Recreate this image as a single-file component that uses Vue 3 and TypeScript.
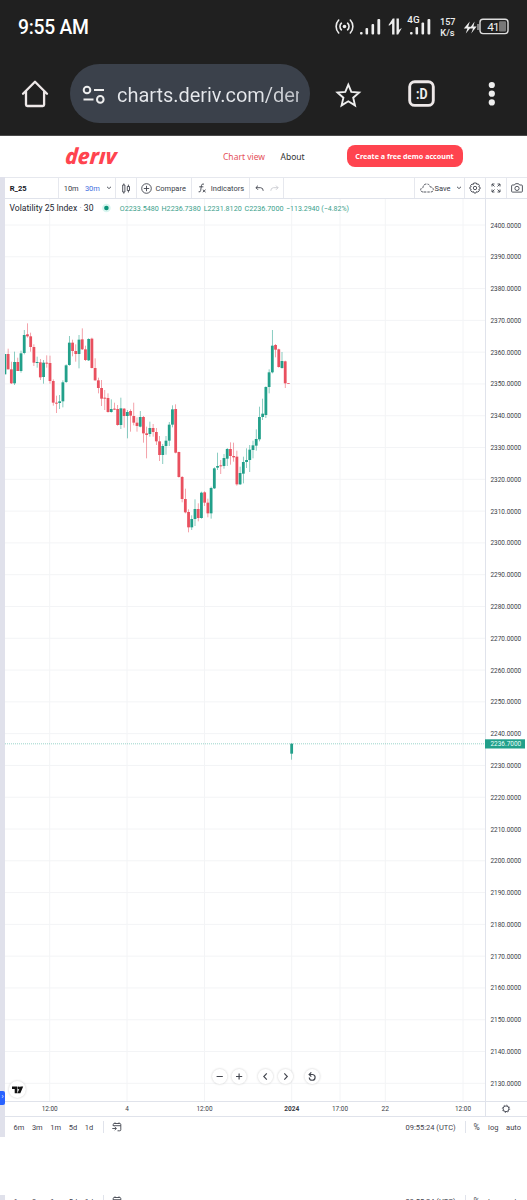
<script setup lang="ts">
type Candle = { x: number; up: boolean; high: number; top: number; bottom: number; low: number }

const STEP = 3.222
const FIRST = 4.9

// Each entry: direction, high, body top, body bottom, low (thirds of a pixel below the group's origin)
type Raw = [string, number, number, number, number]
const groups: { origin: number; rows: Raw[] }[] = [
  {
    origin: 315,
    rows: [
      ['g', 117, 117, 178, 178], ['r', 101, 117, 163, 163], ['r', 140, 163, 205, 207], ['g', 110, 141, 205, 210],
      ['r', 128, 141, 168, 168], ['g', 107, 115, 168, 173], ['g', 45, 60, 114, 118], ['r', 25, 58, 64, 68],
      ['r', 53, 64, 96, 110], ['r', 88, 96, 143, 153], ['g', 125, 141, 144, 158], ['r', 132, 142, 187, 195],
      ['g', 135, 143, 186, 206], ['r', 121, 143, 146, 158], ['r', 122, 144, 198, 206], ['r', 193, 198, 263, 272],
      ['r', 242, 263, 266, 294], ['g', 240, 259, 264, 282], ['g', 196, 202, 259, 277], ['g', 148, 151, 201, 204],
      ['g', 63, 83, 150, 152], ['r', 74, 83, 108, 124], ['r', 88, 108, 117, 140], ['g', 60, 74, 117, 160],
      ['r', 40, 73, 103, 105], ['r', 92, 103, 135, 138], ['g', 70, 72, 136, 138],
    ],
  },
  {
    origin: 330,
    rows: [
      ['r', 23, 26, 114, 115], ['r', 85, 114, 151, 152], ['r', 143, 151, 174, 190], ['r', 150, 174, 206, 228],
      ['r', 180, 203, 206, 240], ['r', 190, 204, 246, 248], ['g', 208, 237, 246, 248], ['r', 218, 236, 239, 240],
      ['r', 225, 237, 285, 287], ['g', 203, 235, 285, 297], ['r', 234, 236, 258, 293], ['g', 240, 246, 258, 325],
      ['r', 238, 243, 257, 305], ['r', 218, 258, 278, 286], ['r', 262, 278, 288, 305], ['g', 243, 261, 290, 292],
      ['r', 258, 261, 310, 338], ['r', 290, 310, 315, 385], ['g', 275, 294, 312, 320], ['r', 282, 294, 306, 320],
      ['r', 294, 306, 334, 345], ['r', 318, 334, 375, 393], ['g', 342, 348, 375, 402], ['g', 318, 332, 348, 374],
      ['g', 276, 284, 332, 348], ['g', 226, 238, 284, 292],
    ],
  },
  {
    origin: 390,
    rows: [
      ['r', 43, 57, 188, 190], ['r', 185, 186, 261, 263], ['r', 258, 261, 327, 337], ['r', 296, 327, 367, 370],
      ['r', 358, 366, 412, 427], ['g', 376, 387, 412, 420], ['g', 328, 357, 387, 408], ['r', 340, 357, 384, 394],
      ['g', 305, 308, 384, 386], ['r', 304, 307, 338, 348], ['r', 326, 338, 370, 382], ['g', 290, 294, 370, 386],
      ['g', 232, 235, 295, 297], ['g', 188, 228, 233, 240], ['r', 210, 226, 229, 252], ['g', 192, 204, 228, 236],
      ['g', 174, 177, 206, 228], ['r', 157, 177, 198, 224], ['r', 158, 198, 202, 215], ['r', 182, 200, 283, 287],
      ['g', 230, 249, 283, 285], ['g', 200, 216, 251, 280], ['g', 175, 210, 216, 234], ['g', 165, 179, 210, 246],
    ],
  },
  {
    origin: 320,
    rows: [
      ['g', 362, 376, 390, 415], ['g', 328, 357, 377, 392], ['g', 260, 291, 358, 364], ['g', 236, 281, 291, 300],
      ['g', 199, 201, 285, 294], ['g', 148, 157, 201, 220], ['g', 30, 77, 157, 160], ['r', 72, 75, 89, 112],
      ['r', 86, 88, 141, 143], ['g', 96, 123, 144, 146], ['r', 122, 124, 190, 204], ['r', 189, 189, 191, 191],
    ],
  },
  { origin: 720, rows: [['g', 71, 71, 101, 119]] },
]

const candles: Candle[] = groups
  .flatMap((g) => g.rows.map((r) => ({ o: g.origin, r })))
  .map(({ o, r }, i) => ({
    x: FIRST + i * STEP,
    up: r[0] === 'g',
    high: o + r[1] / 3,
    top: o + r[2] / 3,
    bottom: o + r[3] / 3,
    low: o + r[4] / 3,
  }))

const prices = Array.from({ length: 28 }, (_, i) => ({
  label: (2400 - i * 10).toFixed(4),
  y: 225 + i * 31.79,
}))

const times = [
  { x: 49.7, label: '12:00', bold: false, w: 16 },
  { x: 127, label: '4', bold: false, w: 3.6 },
  { x: 204.5, label: '12:00', bold: false, w: 16 },
  { x: 291.7, label: '2024', bold: true, w: 15 },
  { x: 340, label: '17:00', bold: false, w: 16 },
  { x: 385.3, label: '22', bold: false, w: 7.5 },
  { x: 463, label: '12:00', bold: false, w: 16 },
]

const ranges = ['6m', '3m', '1m', '5d', '1d']
const footers = ['main', 'next']
</script>

<template>
  <div class="screen">
    <div class="status">
      <span class="clock">9:55 AM</span>
      <svg class="status-icons" width="187" height="40" viewBox="335 8 187 40">
        <g fill="none" stroke="#eee" stroke-width="1.6" stroke-linecap="round">
          <path d="M341.4 23.2a4.5 4.5 0 0 0 0 6.600M347.600 23.200a4.500 4.500 0 0 1 0 6.600" />
          <path d="M338.700 20a9.500 9.500 0 0 0 0 13M350.300 20a9.500 9.500 0 0 1 0 13" />
        </g>
        <circle cx="344.5" cy="26.5" r="1.8" fill="#eee" />
        <g fill="#eee">
          <rect x="360" y="32" width="2.6" height="2.6" rx="1" /><rect x="365.5" y="28" width="2.6" height="6.6" rx="1" />
          <rect x="371.5" y="24" width="2.6" height="10.6" rx="1" /><rect x="377.4" y="19" width="2.8" height="15.6" rx="1" />
          <path d="M388.500 25l4.300-6.500h1.700v16h-2.400V23.400L389 25.800zM396.500 18.500h2.400v11.200l2.900-1.700-3.600 6.500h-1.700z" />
          <rect x="410" y="32" width="2.6" height="2.6" rx="1" /><rect x="415.5" y="27" width="2.6" height="7.6" rx="1" />
          <rect x="421.5" y="22.5" width="2.6" height="12.1" rx="1" /><rect x="427.5" y="19" width="2.8" height="15.6" rx="1" />
        </g>
        <g class="roboto" fill="#eee" font-weight="500">
          <text x="407.3" y="22.7" font-size="9.2" textLength="12.3" lengthAdjust="spacingAndGlyphs">4G</text>
          <text x="440" y="24.6" font-size="8.8" textLength="15.5" lengthAdjust="spacingAndGlyphs">157</text>
          <text x="440.3" y="36" font-size="8.8" textLength="14.3" lengthAdjust="spacingAndGlyphs">K/s</text>
        </g>
        <path d="M469.800 21.500l-6 7h3.600l-1.600 5 5.600-6.800h-3.200zM474.600 21.500l-5 7h3.400l-1.800 5 5.400-7h-3.200z" fill="#eee" />
        <path d="M478 24v6" stroke="#bbb" stroke-width="1.3" />
        <rect x="480" y="19.2" width="28" height="14.4" rx="3" fill="none" stroke="#ddd" stroke-width="1.4" />
        <rect x="499" y="21.3" width="7" height="10.3" rx="1" fill="#777" />
        <text class="roboto" x="487.2" y="30.7" font-size="11.8" fill="#eee" textLength="12.4">41</text>
      </svg>
    </div>

    <div class="browser">
      <svg class="home" width="28" height="30" viewBox="21 79 28 30" fill="none" stroke="#eee8e8" stroke-width="2.3" stroke-linejoin="round" stroke-linecap="round">
        <path d="M23 93.8L35 81.8l12 12M26 91.5v13.200q0 1.300 1.300 1.300h15.500q1.300 0 1.300-1.300V91.500" />
      </svg>
      <div class="pill">
        <svg width="24" height="20" viewBox="82 83 24 20" fill="none" stroke="#eee" stroke-width="2">
          <circle cx="87" cy="89" r="3.300" /><circle cx="100.300" cy="98.400" r="3.300" />
          <path d="M94 89h10M83.500 98.400h10" />
        </svg>
        <div class="url">charts.deriv.com/deriv</div>
      </div>
      <svg class="actions" width="180" height="40" viewBox="330 74 180 40">
        <path d="M348.300 84.700l3 7.200 7.800.7-5.900 5.100 1.800 7.700-6.700-4.100-6.700 4.100 1.800-7.700-5.900-5.100 7.800-.7z" fill="none" stroke="#eee" stroke-width="1.900" />
        <rect x="409.700" y="81.800" width="23.600" height="23.600" rx="5" fill="none" stroke="#eee8e8" stroke-width="2.900" />
        <text class="roboto" x="416" y="98.700" font-size="14" font-weight="700" fill="#eee" textLength="11.600" lengthAdjust="spacingAndGlyphs">:D</text>
        <g fill="#eee"><circle cx="491.800" cy="85" r="3.100" /><circle cx="491.800" cy="93.700" r="3.100" /><circle cx="491.800" cy="102.400" r="3.100" /></g>
      </svg>
    </div>

    <header class="site">
      <svg class="logo" width="56" height="22" viewBox="0 0 56 22" aria-label="deriv">
        <text x="4" y="19.200" transform="skewX(-4)" font-size="22" textLength="51.500" lengthAdjust="spacingAndGlyphs">derıv</text>
      </svg>
      <a class="nav active">Chart view</a>
      <a class="nav about">About</a>
      <button class="cta">Create a free demo account</button>
    </header>

    <div class="widget">
      <div class="rail"><div class="handle">›</div></div>
      <div class="main">
        <div class="toolbar">
          <div class="cell symbol">R_25</div>
          <div class="cell interval">
            <span>10m</span><span class="blue">30m</span>
            <svg width="6" height="4" viewBox="0 0 6 4"><path d="M1 .8l2 1.800L5 .8" /></svg>
          </div>
          <div class="cell c-type">
            <svg width="10" height="11" viewBox="0 0 10 11"><path d="M1.700 2h2.200v7H1.700zM2.800.5V2M2.800 9v1.600M6.300 3.500h2.200v4H6.300zM7.400 1.600v1.900M7.400 7.500v2" /></svg>
          </div>
          <div class="cell compare">
            <svg width="11" height="11" viewBox="0 0 11 11"><circle cx="5.500" cy="5.500" r="4.800" /><path d="M5.500 2.800v5.400M2.800 5.500h5.400" /></svg>
            <span>Compare</span>
          </div>
          <div class="cell indicators">
            <svg width="9" height="10" viewBox="0 0 9 10"><path d="M6 1.100Q3.700.3 3.400 2.700L2.700 7.400Q2.500 9.400.6 8.800M1.200 3.800h4.200M4.800 6.700l2.800 2.500M7.600 6.700l-2.800 2.500" /></svg>
            <span>Indicators</span>
          </div>
          <div class="cell history">
            <svg width="9" height="7" viewBox="0 0 9 7"><path d="M3 .6L.9 2.700 3 4.800M1 2.700h4.600Q8.200 2.900 8.200 5.800" /></svg>
            <svg class="muted" width="9" height="7" viewBox="0 0 9 7"><path d="M6 .6l2.100 2.100L6 4.800M8 2.700H3.400Q.8 2.900.8 5.800" /></svg>
          </div>
          <div class="cell grow"></div>
          <div class="cell save">
            <svg width="14" height="10" viewBox="0 0 14 10" stroke-dasharray="2.400 1"><path d="M3.500 9Q.6 9 .7 6.600.9 4.800 3 4.700 3.300 1 6.700 1q3 .1 3.500 3 2.900 0 3.100 2.500Q13.200 9 10.700 9z" /></svg>
            <span>Save</span>
            <svg width="6" height="4" viewBox="0 0 6 4"><path d="M1 .8l2 1.800L5 .8" /></svg>
          </div>
          <div class="cell tool">
            <svg width="12" height="12" viewBox="0 0 12 12"><path d="M4.700 1h2.600l.5 1.300 1.400-.4 1.200 1.600-.6 1.300 1.300.5v1.600l-1.300.5.500 1.400-1.500 1.300-1.300-.5L7 11H5l-.5-1.400-1.400.5-1.400-1.400.5-1.300L.9 6.800V5.200l1.300-.5-.6-1.300L3 2l1.300.5z" /><circle cx="6" cy="6" r="1.700" /></svg>
          </div>
          <div class="cell tool">
            <svg width="10" height="10" viewBox="0 0 10 10"><path d="M1 3.500V1h2.500M1 1l2.500 2.500M6.500 1H9v2.500M9 1L6.500 3.500M1 6.500V9h2.500M1 9l2.500-2.500M9 6.500V9H6.500M9 9L6.500 6.500" /></svg>
          </div>
          <div class="cell tool last">
            <svg width="12" height="10" viewBox="0 0 12 10"><path d="M1.500 2h2L4.500.7h3L8.500 2h2q.9 0 .9.9v5.300q0 .9-.9.9h-9q-.9 0-.9-.9V2.900q0-.9.9-.9z" /><circle cx="6" cy="5.400" r="2.100" /></svg>
          </div>
        </div>

        <svg class="chart roboto" width="522" height="938" viewBox="5 199 522 938">
          <defs>
            <clipPath id="plot"><rect x="5" y="199" width="480" height="902" /></clipPath>
          </defs>
          <g stroke="#f3f4f6" stroke-width="1">
            <line v-for="t in times" :key="'v' + t.x" :x1="t.x" :x2="t.x" y1="199" y2="1101" />
            <line v-for="p in prices" :key="'h' + p.label" x1="5" x2="485" :y1="p.y" :y2="p.y" />
          </g>
          <g stroke="#e0e3eb" stroke-width="1">
            <path d="M485.500 199v917M5 1101.500h522M5 1116.500h522" fill="none" />
          </g>
          <path d="M5 743.800h480" stroke="#22a08a" stroke-opacity=".65" stroke-width=".7" stroke-dasharray="1 1" />
          <g clip-path="url(#plot)">
            <g v-for="(c, i) in candles" :key="i" :class="c.up ? 'up' : 'down'">
              <rect :x="c.x - 0.35" :y="c.high" width=".7" :height="c.low - c.high" opacity=".75" />
              <rect :x="c.x - 1.4" :y="c.top" width="2.8" :height="c.bottom - c.top" />
            </g>
          </g>

          <g fill="#3a3d47" font-size="7.200">
            <text v-for="p in prices" :key="p.label" x="490.500" :y="p.y + 2.500" textLength="30.700" lengthAdjust="spacingAndGlyphs">{{ p.label }}</text>
            <text v-for="t in times" :key="t.x" :x="t.x" y="1111.300" text-anchor="middle" :font-weight="t.bold ? 700 : 400" :textLength="t.w" lengthAdjust="spacingAndGlyphs">{{ t.label }}</text>
          </g>
          <rect x="485" y="739.300" width="40" height="9.200" fill="#22a08a" />
          <text x="490.500" y="746.400" font-size="7.200" fill="#e8fffa" textLength="30.700" lengthAdjust="spacingAndGlyphs">2236.7000</text>

          <g fill="#23262f">
            <text x="9.600" y="211" font-size="8.700" textLength="67.600" lengthAdjust="spacingAndGlyphs">Volatility 25 Index</text>
            <text x="79.500" y="211" font-size="8.500" fill="#999">·</text>
            <text x="83.800" y="211" font-size="8.700" textLength="9.700" lengthAdjust="spacingAndGlyphs">30</text>
          </g>
          <circle cx="106.400" cy="208" r="4.300" fill="#d8f5ef" /><circle cx="106.400" cy="208" r="2.300" fill="#0b9479" />
          <g font-size="7.600" fill="#3c9f8c">
            <text x="119.800" y="211" textLength="39" lengthAdjust="spacingAndGlyphs">O2233.5480</text>
            <text x="161.500" y="211" textLength="39.200" lengthAdjust="spacingAndGlyphs">H2236.7380</text>
            <text x="203.700" y="211" textLength="38" lengthAdjust="spacingAndGlyphs">L2231.8120</text>
            <text x="244.500" y="211" textLength="39" lengthAdjust="spacingAndGlyphs">C2236.7000</text>
            <text x="286" y="211" textLength="63" lengthAdjust="spacingAndGlyphs">−113.2940 (−4.82%)</text>
          </g>

          <g class="knobs">
            <circle cx="219.700" cy="1076.500" r="7.600" /><circle cx="239.100" cy="1076.500" r="7.600" />
            <circle cx="265.500" cy="1076.500" r="7.600" /><circle cx="285.500" cy="1076.500" r="7.600" />
            <circle cx="312.200" cy="1076.500" r="7.600" /><circle cx="17.300" cy="1089.500" r="8.500" />
          </g>
          <g fill="none" stroke="#43464f" stroke-width="1.150">
            <path d="M216.600 1076.500h6.200M236 1076.500h6.200M239.100 1073.400v6.200M266.800 1073.300l-3 3.200 3 3.200M284.300 1073.300l3 3.200-3 3.200" />
            <path d="M309.300 1074.500h3.300a2.900 2.900 0 1 1-3.300 2.900M311.300 1072.300l-2.200 2.200 2.200 2.200" />
          </g>
          <path d="M12 1086.500h5.300v6.800h-2.600v-4.200H12zM20.400 1086.500h2.800l-2.900 6.800h-2.900z" fill="#111" />
          <circle cx="18.800" cy="1087.900" r="1.300" fill="#111" />
          <g fill="none" stroke="#50535e" stroke-width="1">
            <circle cx="506" cy="1108.800" r="2.900" />
            <circle cx="506" cy="1108.800" r="3.700" stroke-dasharray="1.100 1.806" />
          </g>
        </svg>
      </div>
    </div>

    <div v-for="f in footers" :key="f" class="foot" :class="f">
      <div class="foot-rail"></div>
      <span v-for="r in ranges" :key="r" class="range">{{ r }}</span>
      <i class="sep"></i>
      <svg width="10" height="10" viewBox="0 0 10 10"><path d="M1.200 4V2.500q0-1 1-1h5.600q1 0 1 1v5.300q0 1-1 1H5.500M1.200 3.700h7.600M3 .4v1.500M7 .4v1.500M.3 6.500h4M2.700 4.900l1.700 1.600-1.700 1.600" /></svg>
      <span class="utc">09:55:24 (UTC)</span>
      <i class="sep"></i>
      <span class="pct">%</span>
      <span class="log">log</span>
      <span class="auto">auto</span>
    </div>
  </div>
</template>

<style>
body {
  margin: 0;
  background: #fff;
}
</style>

<style scoped>
.screen {
  width: 527px;
  height: 1200px;
  overflow: hidden;
  background: #fff;
  font-family: Roboto, 'Liberation Sans', sans-serif;
  display: flex;
  flex-direction: column;
}
.roboto {
  font-family: Roboto, sans-serif;
}
svg {
  display: block;
  flex: none;
}
.status {
  height: 54px;
  flex: none;
  background: #202020;
  display: flex;
  align-items: flex-start;
  justify-content: space-between;
  padding: 0 5px 0 18px;
}
.status-icons {
  margin-top: 8px;
}
.clock {
  color: #fff;
  font-size: 19.3px;
  font-weight: 500;
  letter-spacing: -0.25px;
  line-height: 24px;
  margin-top: 15.5px;
}
.browser {
  height: 82px;
  flex: none;
  box-sizing: border-box;
  background: #202020;
  border-bottom: 1px solid #4a4a4a;
  display: flex;
  align-items: flex-start;
}
.home {
  margin: 25px 21px 0;
}
.pill {
  width: 240px;
  height: 59px;
  margin-top: 10px;
  border-radius: 30px;
  background: #3b414b;
  display: flex;
  align-items: center;
  box-sizing: border-box;
  padding-left: 12px;
}
.url {
  width: 182px;
  margin-left: 11px;
  overflow: hidden;
  white-space: nowrap;
  font-size: 20px;
  line-height: 28px;
  letter-spacing: -0.05px;
  margin-top: 2px;
  background: linear-gradient(90deg, #e6e8ec 78%, #b8bbc1);
  background-clip: text;
  color: transparent;
}
.actions {
  margin: 20px 0 0 20px;
}
.site {
  height: 41px;
  flex: none;
  display: flex;
  align-items: center;
  font-family: 'Noto Sans', 'Open Sans', sans-serif;
}
.logo {
  margin: -2px 0 0 62px;
  overflow: visible;
}
.logo text {
  font-family: 'Noto Sans', sans-serif;
  font-weight: 800;
  font-style: italic;
  fill: #ff444f;
}
.nav {
  font-size: 8.5px;
  color: #333;
  white-space: nowrap;
  width: 42px;
}
.nav.active {
  color: #e5505a;
  margin-left: 105px;
}
.nav.about {
  margin-left: 15.5px;
  width: 25px;
}
.cta {
  width: 116px;
  height: 22px;
  margin: -1px 0 0 41px;
  padding: 0;
  border: 0;
  border-radius: 8px;
  background: #ff444f;
  color: #fff;
  font: 700 7.15px 'Noto Sans', sans-serif;
  white-space: nowrap;
}
.widget {
  display: flex;
  height: 960px;
  flex: none;
}
.rail {
  width: 5px;
  flex: none;
  background: #e0e1eb;
  padding-top: 914px;
  box-sizing: border-box;
}
.handle {
  height: 14px;
  width: 5px;
  border-radius: 0 2px 2px 0;
  background: #2962ff;
  color: #fff;
  font-size: 7px;
  line-height: 13px;
  text-align: center;
}
.main {
  width: 522px;
}
.toolbar {
  height: 22px;
  display: flex;
  box-sizing: border-box;
  border-top: 1px solid #e6e8ee;
  border-bottom: 1px solid #e0e3eb;
  font-size: 7.5px;
  color: #3a3d47;
}
.cell {
  display: flex;
  align-items: center;
  box-sizing: border-box;
  flex: none;
  border-right: 1px solid #e6e8ee;
}
.toolbar svg {
  fill: none;
  stroke: #42454f;
  stroke-width: 0.9;
}
.toolbar svg.muted {
  stroke: #c8cad0;
}
.symbol {
  width: 54px;
  padding-left: 4.7px;
  font-weight: 700;
  font-size: 7.6px;
  color: #15171e;
}
.interval {
  width: 57px;
  padding-left: 4.7px;
  gap: 6.2px;
}
.blue {
  color: #3f6fe0;
}
.c-type {
  width: 21px;
  justify-content: center;
}
.compare {
  width: 55px;
  padding-left: 4px;
  gap: 3.4px;
}
.indicators {
  width: 58px;
  padding-left: 6px;
  gap: 3.8px;
}
.history {
  width: 34px;
  padding-left: 5px;
  gap: 6px;
}
.grow {
  flex: 1;
}
.save {
  width: 50px;
  padding-left: 4.5px;
  gap: 1px;
}
.save span {
  margin-right: 4px;
}
.tool {
  width: 21px;
  justify-content: center;
}
.tool.last {
  width: 20px;
  border-right: 0;
}
.up {
  fill: #22a08a;
}
.down {
  fill: #e9505f;
}
.knobs circle {
  fill: #fff;
  filter: drop-shadow(0 0.5px 1px rgba(0, 0, 0, 0.2));
}
.foot {
  flex: none;
  height: 20px;
  margin-top: -20px;
  display: flex;
  align-items: center;
  font-size: 7.5px;
  color: #3f424c;
}
.foot.next {
  margin-top: 54px;
}
.foot-rail {
  width: 5px;
  align-self: stretch;
  background: #e0e1eb;
  margin-right: 8.5px;
}
.next .foot-rail {
  margin-top: 4px;
}
.range {
  width: 11px;
  margin-right: 7.4px;
  white-space: nowrap;
}
.range:nth-of-type(4) {
  margin-right: 5px;
}
.sep {
  width: 1px;
  height: 12px;
  background: #e0e3eb;
}
.foot svg {
  fill: none;
  stroke: #42454f;
  stroke-width: 0.9;
  margin-left: 8px;
}
.utc {
  width: 51px;
  margin-left: 283.5px;
  margin-right: 8px;
  white-space: nowrap;
}
.pct {
  margin-left: 8px;
  width: 8px;
  font-size: 8.5px;
}
.log {
  margin-left: 6.5px;
  width: 11px;
}
.auto {
  margin-left: 7px;
}
</style>
